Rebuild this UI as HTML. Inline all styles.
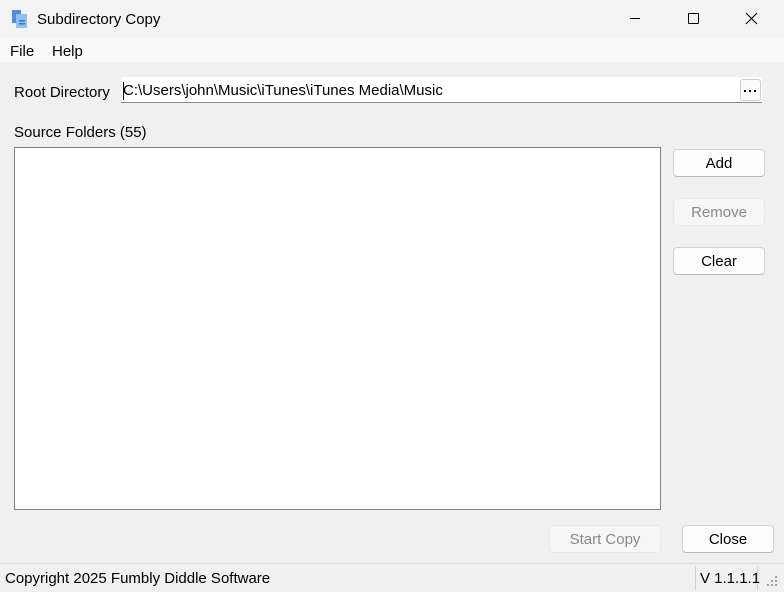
<!DOCTYPE html>
<html><head><style>
*{margin:0;padding:0;box-sizing:border-box}
body{width:784px;height:592px;background:#f0f0f0;font-family:"Liberation Sans",sans-serif;font-size:15px;color:#000;position:relative;overflow:hidden}
.a{position:absolute}
.btn{position:absolute;background:#fdfdfd;border:1px solid #d0d0d0;border-bottom-color:#b8b8b8;border-radius:4px;text-align:center;font-size:15px;line-height:27px}
.dis{background:#f6f6f6;border-color:#e6e6e6;color:#8a8a8a}
</style></head><body>
<div class="a" style="left:0;top:0;width:784px;height:38px;background:#f3f3f3"></div>
<svg class="a" style="left:11px;top:9px" width="18" height="20" viewBox="0 0 18 20"><rect x="1" y="1" width="9" height="13" fill="#4a8fe0"/><rect x="5" y="5" width="11" height="14" fill="#8ec0f5"/><rect x="8" y="11" width="6" height="1.5" fill="#3a75c0"/><rect x="8" y="14" width="6" height="1.5" fill="#3a75c0"/></svg>
<div class="a" style="left:37px;top:11px">Subdirectory Copy</div>
<div class="a" style="left:630px;top:18px;width:10px;height:1px;background:#000"></div>
<div class="a" style="left:688px;top:13px;width:11px;height:11px;border:1px solid #000;border-radius:1px"></div>
<svg class="a" style="left:745px;top:12px" width="13" height="13"><path d="M1 1L12 12M12 1L1 12" stroke="#000" stroke-width="1.1"/></svg>
<div class="a" style="left:0;top:38px;width:784px;height:24px;background:#f9f9f9"></div>
<div class="a" style="left:10px;top:43px">File</div>
<div class="a" style="left:52px;top:43px">Help</div>
<div class="a" style="left:14px;top:84px">Root Directory</div>
<div class="a" style="left:121px;top:77px;width:641px;height:26px;background:#fff;border-bottom:1px solid #8a8a8a"></div>
<div class="a" style="left:123px;top:82px;width:1px;height:18px;background:#000"></div>
<div class="a" style="left:123px;top:82px">C:\Users\john\Music\iTunes\iTunes Media\Music</div>
<div class="a" style="left:740px;top:79px;width:21px;height:22px;border:1px solid #ccc;border-radius:3px;background:#fbfbfb"></div>
<div class="a" style="left:744px;top:90px;width:2px;height:2px;background:#000"></div>
<div class="a" style="left:749px;top:90px;width:2px;height:2px;background:#000"></div>
<div class="a" style="left:754px;top:90px;width:2px;height:2px;background:#000"></div>
<div class="a" style="left:14px;top:124px">Source Folders (55)</div>
<div class="a" style="left:14px;top:147px;width:647px;height:363px;background:#fff;border:1px solid #828282"></div>
<div class="btn" style="left:673px;top:149px;width:92px;height:28px">Add</div>
<div class="btn dis" style="left:673px;top:198px;width:92px;height:28px">Remove</div>
<div class="btn" style="left:673px;top:247px;width:92px;height:28px">Clear</div>
<div class="btn dis" style="left:549px;top:525px;width:112px;height:28px">Start Copy</div>
<div class="btn" style="left:682px;top:525px;width:92px;height:28px">Close</div>
<div class="a" style="left:0;top:563px;width:784px;height:1px;background:#dcdcdc"></div>
<div class="a" style="left:5px;top:570px">Copyright 2025 Fumbly Diddle Software</div>
<div class="a" style="left:695px;top:566px;width:1px;height:24px;background:#d0d0d0"></div>
<div class="a" style="left:757px;top:566px;width:1px;height:24px;background:#d0d0d0"></div>
<div class="a" style="left:700px;top:570px">V 1.1.1.1</div>
<svg class="a" style="left:767px;top:576px" width="12" height="12"><g fill="#a0a0a0"><rect x="8" y="0" width="2" height="2"/><rect x="4" y="4" width="2" height="2"/><rect x="8" y="4" width="2" height="2"/><rect x="0" y="8" width="2" height="2"/><rect x="4" y="8" width="2" height="2"/><rect x="8" y="8" width="2" height="2"/></g></svg>
</body></html>
